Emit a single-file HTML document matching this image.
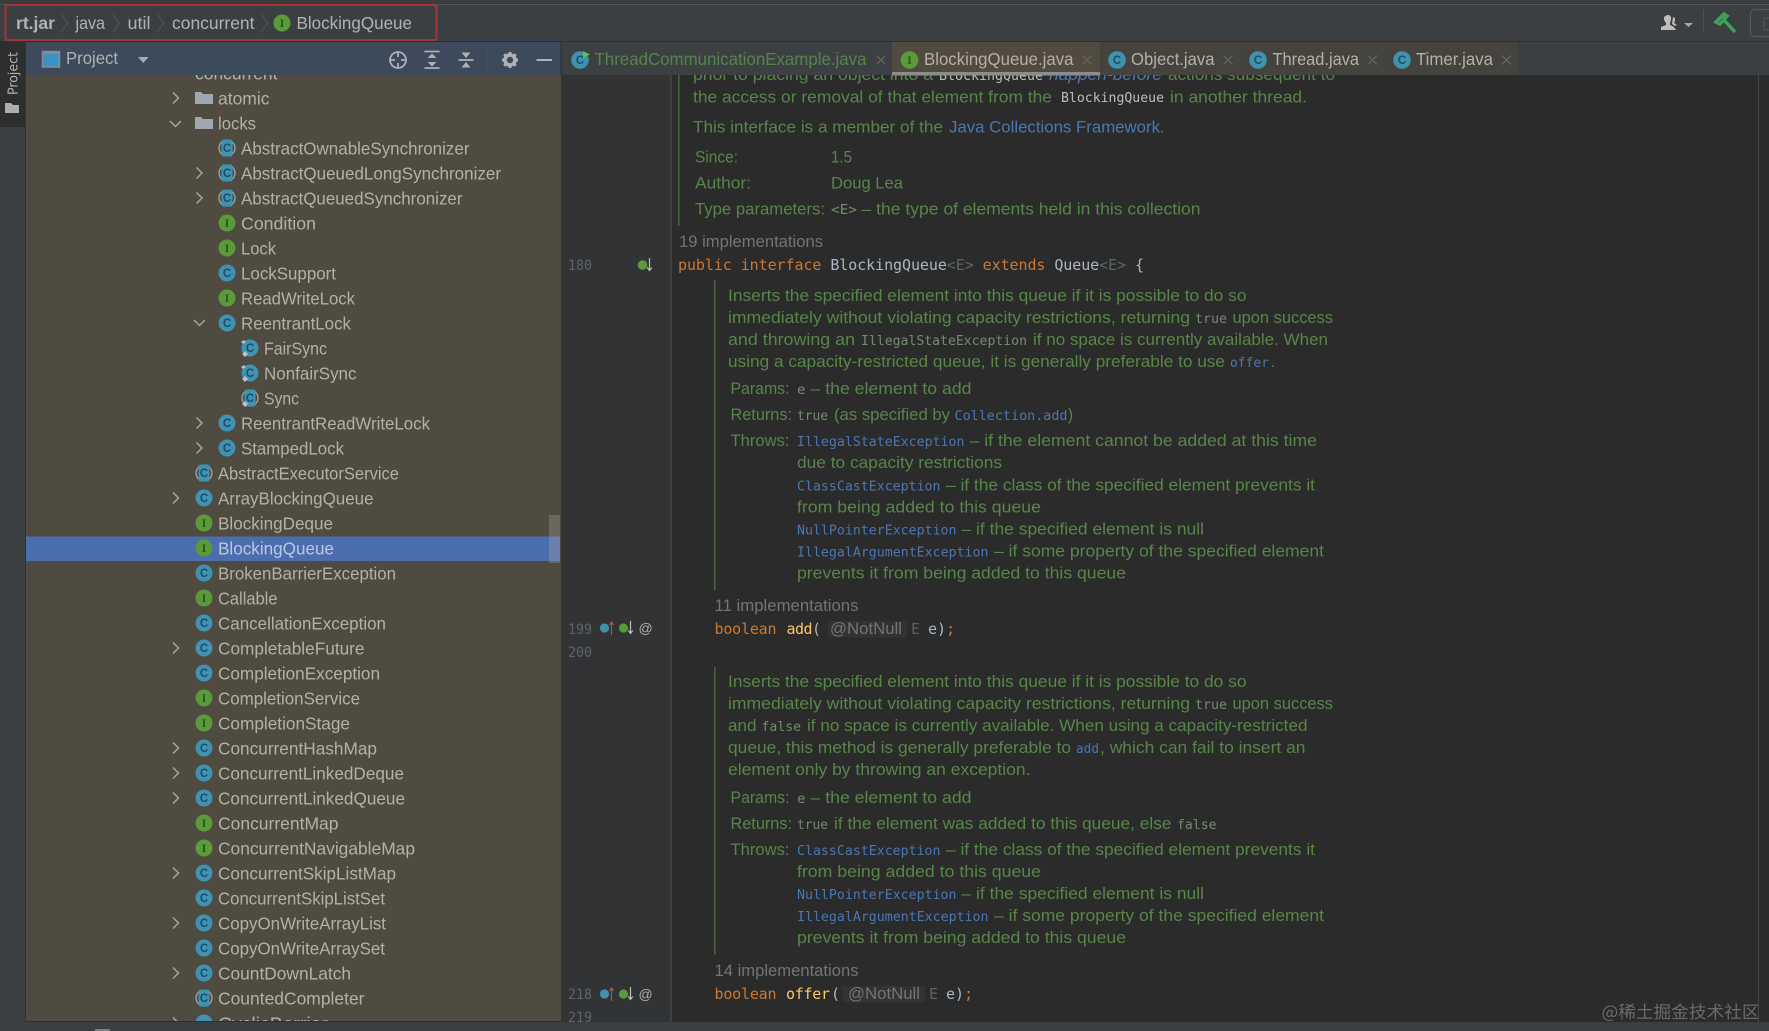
<!DOCTYPE html>
<html lang="en"><head><meta charset="utf-8"><title>BlockingQueue.java</title>
<style>
html,body{margin:0;padding:0;background:#2b2b2b;width:1769px;height:1031px;overflow:hidden}
svg{display:block}
text{white-space:pre}
.t{font:17.5px "Liberation Sans",sans-serif;fill:#b3b1a6;transform:translateY(-1px)}
.d{font:16.5px "Liberation Sans",sans-serif;fill:#588549}
.m{font:13px "DejaVu Sans Mono","Liberation Mono",monospace;fill:#728d6e}
.b{font:13px "DejaVu Sans Mono","Liberation Mono",monospace;fill:#4a77b4}
.w{font:13px "DejaVu Sans Mono","Liberation Mono",monospace;fill:#bdbdbd}
.l{font:16.5px "Liberation Sans",sans-serif;fill:#4a77b4}
.g{font:16.5px "Liberation Sans",sans-serif;fill:#747474}
.n{font:14px "DejaVu Sans Mono","Liberation Mono",monospace;fill:#606366}
.c{font:15px "DejaVu Sans Mono","Liberation Mono",monospace;fill:#a9b7c6}
.k{fill:#cc7832}.f{fill:#ffc66d}.e{fill:#5a6668}
.ci{font:bold 11.5px "Liberation Sans",sans-serif;fill:#174f6c;text-anchor:middle}
.ii{font:bold 12px "Liberation Serif",serif;fill:#255c18;text-anchor:middle}
.cc{fill:#4092b0}.ic{fill:#5b9a3a}
.ch{fill:none;stroke:#a5a39a;stroke-width:1.5}
.ring{fill:none;stroke:#9aa7b0;stroke-width:1.3}
.bc{fill:none;stroke:#55585a;stroke-width:1}
.x{stroke:#64645e;stroke-width:1.3;fill:none}
.ico{fill:none;stroke:#afb1b3;stroke-width:1.8}
.tab{font:17.5px "Liberation Sans",sans-serif;fill:#b3b1a7}
.crumb{font:17.5px "Liberation Sans",sans-serif;fill:#b0b2b3}
</style></head><body>
<svg xmlns="http://www.w3.org/2000/svg" width="1769" height="1031" viewBox="0 0 1769 1031">
<rect width="1769" height="1031" fill="#2b2b2b"/>
<rect x="561" y="42" width="110" height="989" fill="#313335"/>
<line x1="671" y1="42" x2="671" y2="1022" stroke="#505254" stroke-width="1"/>
<line x1="1758.5" y1="75" x2="1758.5" y2="1022" stroke="#434343" stroke-width="1"/>

<!-- editor top doc -->
<rect x="678" y="75" width="1.6" height="151" fill="#46603f"/>
<text class="d" x="693" y="80" textLength="240" lengthAdjust="spacingAndGlyphs">prior to placing an object into a</text>
<text class="w" x="939" y="80" textLength="104" lengthAdjust="spacingAndGlyphs">BlockingQueue</text>
<text class="l" x="1049" y="80" textLength="113" lengthAdjust="spacingAndGlyphs" style="font-style:italic">happen-before</text>
<text class="d" x="1168" y="80" textLength="167" lengthAdjust="spacingAndGlyphs">actions subsequent to</text>
<text class="d" x="693" y="102.5" textLength="359" lengthAdjust="spacingAndGlyphs">the access or removal of that element from the</text>
<text class="w" x="1061" y="102" textLength="103" lengthAdjust="spacingAndGlyphs">BlockingQueue</text>
<text class="d" x="1170" y="102.5" textLength="137" lengthAdjust="spacingAndGlyphs">in another thread.</text>
<text class="d" x="693" y="132.5" textLength="250" lengthAdjust="spacingAndGlyphs">This interface is a member of the</text>
<text class="l" x="949" y="132.5" textLength="211" lengthAdjust="spacingAndGlyphs">Java Collections Framework</text>
<text class="d" x="1160" y="132.5" textLength="4" lengthAdjust="spacingAndGlyphs">.</text>
<text class="d" x="695" y="162.5" textLength="43" lengthAdjust="spacingAndGlyphs">Since:</text>
<text class="d" x="831" y="162.5" textLength="21" lengthAdjust="spacingAndGlyphs">1.5</text>
<text class="d" x="695" y="188.5" textLength="56" lengthAdjust="spacingAndGlyphs">Author:</text>
<text class="d" x="831" y="188.5" textLength="72" lengthAdjust="spacingAndGlyphs">Doug Lea</text>
<text class="d" x="695" y="214.5" textLength="130" lengthAdjust="spacingAndGlyphs">Type parameters:</text>
<text class="m" x="831" y="214" textLength="26" lengthAdjust="spacingAndGlyphs">&lt;E&gt;</text>
<text class="d" x="861.5" y="214.5" textLength="339" lengthAdjust="spacingAndGlyphs">– the type of elements held in this collection</text>
<text class="g" x="679" y="247" textLength="144" lengthAdjust="spacingAndGlyphs">19 implementations</text>

<text class="n" x="568" y="270" textLength="24" lengthAdjust="spacingAndGlyphs">180</text>
<circle cx="642.5" cy="265" r="4.8" fill="#5b9a3a"/><path d="M649.5 258v12M647.2 267.5l2.3 3 2.3-3" fill="none" stroke="#bdbdbd" stroke-width="1.2"/>
<text class="c" x="678" y="270" textLength="466" lengthAdjust="spacing"><tspan class="k">public interface </tspan>BlockingQueue<tspan class="e">&lt;E&gt;</tspan> <tspan class="k">extends </tspan>Queue<tspan class="e">&lt;E&gt;</tspan> {</text>

<!-- block 1 -->
<rect x="714" y="280" width="1.6" height="310" fill="#46603f"/>
<text class="d" x="728" y="301" textLength="518.5" lengthAdjust="spacingAndGlyphs">Inserts the specified element into this queue if it is possible to do so</text>
<text class="d" x="728" y="323" textLength="462" lengthAdjust="spacingAndGlyphs">immediately without violating capacity restrictions, returning</text>
<text class="m" x="1195" y="323" textLength="32" lengthAdjust="spacingAndGlyphs">true</text>
<text class="d" x="1232.5" y="323" textLength="100.5" lengthAdjust="spacingAndGlyphs">upon success</text>
<text class="d" x="728" y="345" textLength="127" lengthAdjust="spacingAndGlyphs">and throwing an</text>
<text class="m" x="861" y="345" textLength="166" lengthAdjust="spacingAndGlyphs">IllegalStateException</text>
<text class="d" x="1033" y="345" textLength="295" lengthAdjust="spacingAndGlyphs">if no space is currently available. When</text>
<text class="d" x="728" y="367" textLength="497" lengthAdjust="spacingAndGlyphs">using a capacity-restricted queue, it is generally preferable to use</text>
<text class="b" x="1230" y="367" textLength="39" lengthAdjust="spacingAndGlyphs">offer</text>
<text class="d" x="1271" y="367" textLength="4" lengthAdjust="spacingAndGlyphs">.</text>
<text class="d" x="730.5" y="394" textLength="59" lengthAdjust="spacingAndGlyphs">Params:</text>
<text class="m" x="797" y="394" textLength="8.5" lengthAdjust="spacingAndGlyphs">e</text>
<text class="d" x="810.5" y="394" textLength="161" lengthAdjust="spacingAndGlyphs">– the element to add</text>
<text class="d" x="730.5" y="420" textLength="61.5" lengthAdjust="spacingAndGlyphs">Returns:</text>
<text class="m" x="797" y="420" textLength="31" lengthAdjust="spacingAndGlyphs">true</text>
<text class="d" x="834" y="420" textLength="116" lengthAdjust="spacingAndGlyphs">(as specified by</text>
<text class="b" x="954.5" y="420" textLength="113" lengthAdjust="spacingAndGlyphs">Collection.add</text>
<text class="d" x="1068" y="420" textLength="5" lengthAdjust="spacingAndGlyphs">)</text>
<text class="d" x="730.5" y="446" textLength="59" lengthAdjust="spacingAndGlyphs">Throws:</text>
<text class="b" x="797" y="446" textLength="167.5" lengthAdjust="spacingAndGlyphs">IllegalStateException</text>
<text class="d" x="969.5" y="446" textLength="347.5" lengthAdjust="spacingAndGlyphs">– if the element cannot be added at this time</text>
<text class="d" x="797" y="468" textLength="205" lengthAdjust="spacingAndGlyphs">due to capacity restrictions</text>
<text class="b" x="797" y="490.5" textLength="143.5" lengthAdjust="spacingAndGlyphs">ClassCastException</text>
<text class="d" x="946" y="490.5" textLength="369" lengthAdjust="spacingAndGlyphs">– if the class of the specified element prevents it</text>
<text class="d" x="797" y="512.5" textLength="244" lengthAdjust="spacingAndGlyphs">from being added to this queue</text>
<text class="b" x="797" y="534.5" textLength="159.5" lengthAdjust="spacingAndGlyphs">NullPointerException</text>
<text class="d" x="961.5" y="534.5" textLength="242.5" lengthAdjust="spacingAndGlyphs">– if the specified element is null</text>
<text class="b" x="797" y="556.5" textLength="191.5" lengthAdjust="spacingAndGlyphs">IllegalArgumentException</text>
<text class="d" x="994" y="556.5" textLength="330" lengthAdjust="spacingAndGlyphs">– if some property of the specified element</text>
<text class="d" x="797" y="578.5" textLength="329" lengthAdjust="spacingAndGlyphs">prevents it from being added to this queue</text>
<text class="g" x="714.5" y="611" textLength="144" lengthAdjust="spacingAndGlyphs">11 implementations</text>

<text class="n" x="568" y="634" textLength="24" lengthAdjust="spacingAndGlyphs">199</text>
<circle cx="604.5" cy="628" r="4.6" fill="#3e90ad"/><path d="M611.5 635v-12M609.3 625l2.2-3 2.2 3" fill="none" stroke="#b5523a" stroke-width="1.2"/>
<circle cx="623.5" cy="628" r="4.6" fill="#5b9a3a"/><path d="M630.5 621v12M628.3 630.5l2.2 3 2.2-3" fill="none" stroke="#bdbdbd" stroke-width="1.2"/>
<text x="638.5" y="633" font-family="Liberation Sans,sans-serif" font-size="14" fill="#b0b0b0">@</text>
<text class="n" x="568" y="657" textLength="24" lengthAdjust="spacingAndGlyphs">200</text>

<text class="c k" x="714.5" y="634" textLength="62" lengthAdjust="spacing">boolean</text>
<text class="c f" x="786.5" y="634" textLength="26" lengthAdjust="spacing">add</text>
<text class="c" x="812" y="634">(</text>
<rect x="828" y="621" width="79" height="16.5" rx="2" fill="#333333"/>
<text x="830" y="634" class="g" textLength="72" lengthAdjust="spacingAndGlyphs">@NotNull</text>
<text class="c" x="911" y="634" style="fill:#606060">E</text>
<text class="c" x="928" y="634">e)<tspan class="k">;</tspan></text>

<!-- block 2 -->
<rect x="714" y="667" width="1.6" height="288" fill="#46603f"/>
<text class="d" x="728" y="687" textLength="518.5" lengthAdjust="spacingAndGlyphs">Inserts the specified element into this queue if it is possible to do so</text>
<text class="d" x="728" y="709" textLength="462" lengthAdjust="spacingAndGlyphs">immediately without violating capacity restrictions, returning</text>
<text class="m" x="1195" y="709" textLength="32" lengthAdjust="spacingAndGlyphs">true</text>
<text class="d" x="1232.5" y="709" textLength="100.5" lengthAdjust="spacingAndGlyphs">upon success</text>
<text class="d" x="728" y="731" textLength="28.5" lengthAdjust="spacingAndGlyphs">and</text>
<text class="m" x="761.5" y="731" textLength="39.5" lengthAdjust="spacingAndGlyphs">false</text>
<text class="d" x="807" y="731" textLength="500.5" lengthAdjust="spacingAndGlyphs">if no space is currently available. When using a capacity-restricted</text>
<text class="d" x="728" y="753" textLength="343" lengthAdjust="spacingAndGlyphs">queue, this method is generally preferable to</text>
<text class="b" x="1076" y="753" textLength="23" lengthAdjust="spacingAndGlyphs">add</text>
<text class="d" x="1100" y="753" textLength="205.5" lengthAdjust="spacingAndGlyphs">, which can fail to insert an</text>
<text class="d" x="728" y="775" textLength="302.5" lengthAdjust="spacingAndGlyphs">element only by throwing an exception.</text>
<text class="d" x="730.5" y="803" textLength="59" lengthAdjust="spacingAndGlyphs">Params:</text>
<text class="m" x="797" y="803" textLength="8.5" lengthAdjust="spacingAndGlyphs">e</text>
<text class="d" x="810.5" y="803" textLength="161" lengthAdjust="spacingAndGlyphs">– the element to add</text>
<text class="d" x="730.5" y="829" textLength="61.5" lengthAdjust="spacingAndGlyphs">Returns:</text>
<text class="m" x="797" y="829" textLength="31" lengthAdjust="spacingAndGlyphs">true</text>
<text class="d" x="834" y="829" textLength="337.5" lengthAdjust="spacingAndGlyphs">if the element was added to this queue, else</text>
<text class="m" x="1177" y="829" textLength="39.5" lengthAdjust="spacingAndGlyphs">false</text>
<text class="d" x="730.5" y="855" textLength="59" lengthAdjust="spacingAndGlyphs">Throws:</text>
<text class="b" x="797" y="855" textLength="143.5" lengthAdjust="spacingAndGlyphs">ClassCastException</text>
<text class="d" x="946" y="855" textLength="369" lengthAdjust="spacingAndGlyphs">– if the class of the specified element prevents it</text>
<text class="d" x="797" y="877" textLength="244" lengthAdjust="spacingAndGlyphs">from being added to this queue</text>
<text class="b" x="797" y="899" textLength="159.5" lengthAdjust="spacingAndGlyphs">NullPointerException</text>
<text class="d" x="961.5" y="899" textLength="242.5" lengthAdjust="spacingAndGlyphs">– if the specified element is null</text>
<text class="b" x="797" y="921" textLength="191.5" lengthAdjust="spacingAndGlyphs">IllegalArgumentException</text>
<text class="d" x="994" y="921" textLength="330" lengthAdjust="spacingAndGlyphs">– if some property of the specified element</text>
<text class="d" x="797" y="943" textLength="329" lengthAdjust="spacingAndGlyphs">prevents it from being added to this queue</text>
<text class="g" x="714.5" y="976" textLength="144" lengthAdjust="spacingAndGlyphs">14 implementations</text>

<text class="n" x="568" y="999" textLength="24" lengthAdjust="spacingAndGlyphs">218</text>
<circle cx="604.5" cy="994" r="4.6" fill="#3e90ad"/><path d="M611.5 1001v-12M609.3 991l2.2-3 2.2 3" fill="none" stroke="#b5523a" stroke-width="1.2"/>
<circle cx="623.5" cy="994" r="4.6" fill="#5b9a3a"/><path d="M630.5 987v12M628.3 996.5l2.2 3 2.2-3" fill="none" stroke="#bdbdbd" stroke-width="1.2"/>
<text x="638.5" y="999" font-family="Liberation Sans,sans-serif" font-size="14" fill="#b0b0b0">@</text>
<text class="n" x="568" y="1022" textLength="24" lengthAdjust="spacingAndGlyphs">219</text>
<text class="c k" x="714.5" y="999" textLength="62" lengthAdjust="spacing">boolean</text>
<text class="c f" x="786" y="999" textLength="44" lengthAdjust="spacing">offer</text>
<text class="c" x="831" y="999">(</text>
<rect x="842" y="986" width="83" height="16.5" rx="2" fill="#333333"/>
<text x="848" y="999" class="g" textLength="72" lengthAdjust="spacingAndGlyphs">@NotNull</text>
<text class="c" x="929" y="999" style="fill:#606060">E</text>
<text class="c" x="946" y="999">e)<tspan class="k">;</tspan></text>

<text x="1601.5" y="1018" font-family="'Noto Sans CJK SC',sans-serif" font-size="17" fill="#6a6a6a" textLength="158" lengthAdjust="spacingAndGlyphs">@稀土掘金技术社区</text>

<!-- project tool window tree -->
<rect x="26" y="42" width="535" height="980" fill="#4f4b41"/>
<rect x="26" y="536.5" width="534" height="24.5" fill="#4b6eaf"/>
<rect x="549" y="515" width="11" height="21.5" fill="#6a675f"/>
<rect x="549" y="536.5" width="11" height="24.5" fill="#6b81ab"/>
<rect x="549" y="561" width="11" height="2" fill="#6a675f"/>

<path d="M172 74V69h18v5z" fill="#a0a6ad"/><text class="t" x="195" y="80.5" textLength="82.5" lengthAdjust="spacingAndGlyphs">concurrent</text>
<path class="ch" d="M173 92.5l5.5 5.5-5.5 5.5"/>
<path d="M195 104V92h6l2 2h10v10z" fill="#a0a6ad"/><text class="t" x="218" y="105.5" textLength="51.5" lengthAdjust="spacingAndGlyphs">atomic</text>
<path class="ch" d="M170 121l5.5 5.5 5.5-5.5"/>
<path d="M195 129V117h6l2 2h10v10z" fill="#a0a6ad"/><text class="t" x="218" y="130.5" textLength="38" lengthAdjust="spacingAndGlyphs">locks</text>

<circle class="ring" cx="227" cy="148" r="8"/><rect class="cc" x="221.5" y="139.5" width="11" height="17" rx="2"/><text class="ci" x="227" y="152">C</text>
<text class="t" x="241" y="155.5" textLength="228.5" lengthAdjust="spacingAndGlyphs">AbstractOwnableSynchronizer</text>
<path class="ch" d="M196.5 167.5l5.5 5.5-5.5 5.5"/><circle class="ring" cx="227" cy="173" r="8"/><rect class="cc" x="221.5" y="164.5" width="11" height="17" rx="2"/><text class="ci" x="227" y="177">C</text>
<text class="t" x="241" y="180.5" textLength="260" lengthAdjust="spacingAndGlyphs">AbstractQueuedLongSynchronizer</text>
<path class="ch" d="M196.5 192.5l5.5 5.5-5.5 5.5"/><circle class="ring" cx="227" cy="198" r="8"/><rect class="cc" x="221.5" y="189.5" width="11" height="17" rx="2"/><text class="ci" x="227" y="202">C</text>
<text class="t" x="241" y="205.5" textLength="221.5" lengthAdjust="spacingAndGlyphs">AbstractQueuedSynchronizer</text>
<circle class="ic" cx="227" cy="223" r="8.5"/><text class="ii" x="227" y="227">I</text>
<text class="t" x="241" y="230.5" textLength="75" lengthAdjust="spacingAndGlyphs">Condition</text>
<circle class="ic" cx="227" cy="248" r="8.5"/><text class="ii" x="227" y="252">I</text>
<text class="t" x="241" y="255.5" textLength="35" lengthAdjust="spacingAndGlyphs">Lock</text>
<circle class="cc" cx="227" cy="273" r="8.5"/><text class="ci" x="227" y="277">C</text>
<text class="t" x="241" y="280.5" textLength="95" lengthAdjust="spacingAndGlyphs">LockSupport</text>
<circle class="ic" cx="227" cy="298" r="8.5"/><text class="ii" x="227" y="302">I</text>
<text class="t" x="241" y="305.5" textLength="114" lengthAdjust="spacingAndGlyphs">ReadWriteLock</text>
<path class="ch" d="M194 320l5.5 5.5 5.5-5.5"/><circle class="cc" cx="227" cy="323" r="8.5"/><text class="ci" x="227" y="327">C</text>
<text class="t" x="241" y="330.5" textLength="110" lengthAdjust="spacingAndGlyphs">ReentrantLock</text>

<circle class="cc" cx="250" cy="348" r="8.5"/><text class="ci" x="250" y="352">C</text><path d="M241 342l3-2 2 2-3 2zM242 354l3-3 3 3-3 3z" fill="#b8c0c8"/>
<text class="t" x="264" y="355.5" textLength="63" lengthAdjust="spacingAndGlyphs">FairSync</text>
<circle class="cc" cx="250" cy="373" r="8.5"/><text class="ci" x="250" y="377">C</text><path d="M241 367l3-2 2 2-3 2zM242 379l3-3 3 3-3 3z" fill="#b8c0c8"/>
<text class="t" x="264" y="380.5" textLength="92.5" lengthAdjust="spacingAndGlyphs">NonfairSync</text>
<circle class="ring" cx="250" cy="398" r="8"/><rect class="cc" x="244.5" y="389.5" width="11" height="17" rx="2"/><text class="ci" x="250" y="402">C</text><path d="M242 404l3-3 3 3-3 3z" fill="#b8c0c8"/>
<text class="t" x="264" y="405.5" textLength="35" lengthAdjust="spacingAndGlyphs">Sync</text>

<path class="ch" d="M196.5 417.5l5.5 5.5-5.5 5.5"/><circle class="cc" cx="227" cy="423" r="8.5"/><text class="ci" x="227" y="427">C</text>
<text class="t" x="241" y="430.5" textLength="189" lengthAdjust="spacingAndGlyphs">ReentrantReadWriteLock</text>
<path class="ch" d="M196.5 442.5l5.5 5.5-5.5 5.5"/><circle class="cc" cx="227" cy="448" r="8.5"/><text class="ci" x="227" y="452">C</text>
<text class="t" x="241" y="455.5" textLength="103" lengthAdjust="spacingAndGlyphs">StampedLock</text>

<circle class="ring" cx="204" cy="473" r="8"/><rect class="cc" x="198.5" y="464.5" width="11" height="17" rx="2"/><text class="ci" x="204" y="477">C</text>
<text class="t" x="218" y="480.5" textLength="181" lengthAdjust="spacingAndGlyphs">AbstractExecutorService</text>
<path class="ch" d="M173 492.5l5.5 5.5-5.5 5.5"/><circle class="cc" cx="204" cy="498" r="8.5"/><text class="ci" x="204" y="502">C</text>
<text class="t" x="218" y="505.5" textLength="155.5" lengthAdjust="spacingAndGlyphs">ArrayBlockingQueue</text>
<circle class="ic" cx="204" cy="523" r="8.5"/><text class="ii" x="204" y="527">I</text>
<text class="t" x="218" y="530.5" textLength="115" lengthAdjust="spacingAndGlyphs">BlockingDeque</text>
<circle class="ic" cx="204" cy="548" r="8.5"/><text class="ii" x="204" y="552">I</text>
<text class="t" x="218" y="555.5" textLength="116" lengthAdjust="spacingAndGlyphs" style="fill:#bcc8dc">BlockingQueue</text>
<circle class="cc" cx="204" cy="573" r="8.5"/><text class="ci" x="204" y="577">C</text>
<text class="t" x="218" y="580.5" textLength="178" lengthAdjust="spacingAndGlyphs">BrokenBarrierException</text>
<circle class="ic" cx="204" cy="598" r="8.5"/><text class="ii" x="204" y="602">I</text>
<text class="t" x="218" y="605.5" textLength="59.5" lengthAdjust="spacingAndGlyphs">Callable</text>
<circle class="cc" cx="204" cy="623" r="8.5"/><text class="ci" x="204" y="627">C</text>
<text class="t" x="218" y="630.5" textLength="168" lengthAdjust="spacingAndGlyphs">CancellationException</text>
<path class="ch" d="M173 642.5l5.5 5.5-5.5 5.5"/><circle class="cc" cx="204" cy="648" r="8.5"/><text class="ci" x="204" y="652">C</text>
<text class="t" x="218" y="655.5" textLength="146.5" lengthAdjust="spacingAndGlyphs">CompletableFuture</text>
<circle class="cc" cx="204" cy="673" r="8.5"/><text class="ci" x="204" y="677">C</text>
<text class="t" x="218" y="680.5" textLength="162" lengthAdjust="spacingAndGlyphs">CompletionException</text>
<circle class="ic" cx="204" cy="698" r="8.5"/><text class="ii" x="204" y="702">I</text>
<text class="t" x="218" y="705.5" textLength="142" lengthAdjust="spacingAndGlyphs">CompletionService</text>
<circle class="ic" cx="204" cy="723" r="8.5"/><text class="ii" x="204" y="727">I</text>
<text class="t" x="218" y="730.5" textLength="132" lengthAdjust="spacingAndGlyphs">CompletionStage</text>
<path class="ch" d="M173 742.5l5.5 5.5-5.5 5.5"/><circle class="cc" cx="204" cy="748" r="8.5"/><text class="ci" x="204" y="752">C</text>
<text class="t" x="218" y="755.5" textLength="159" lengthAdjust="spacingAndGlyphs">ConcurrentHashMap</text>
<path class="ch" d="M173 767.5l5.5 5.5-5.5 5.5"/><circle class="cc" cx="204" cy="773" r="8.5"/><text class="ci" x="204" y="777">C</text>
<text class="t" x="218" y="780.5" textLength="186" lengthAdjust="spacingAndGlyphs">ConcurrentLinkedDeque</text>
<path class="ch" d="M173 792.5l5.5 5.5-5.5 5.5"/><circle class="cc" cx="204" cy="798" r="8.5"/><text class="ci" x="204" y="802">C</text>
<text class="t" x="218" y="805.5" textLength="187" lengthAdjust="spacingAndGlyphs">ConcurrentLinkedQueue</text>
<circle class="ic" cx="204" cy="823" r="8.5"/><text class="ii" x="204" y="827">I</text>
<text class="t" x="218" y="830.5" textLength="120.5" lengthAdjust="spacingAndGlyphs">ConcurrentMap</text>
<circle class="ic" cx="204" cy="848" r="8.5"/><text class="ii" x="204" y="852">I</text>
<text class="t" x="218" y="855.5" textLength="197" lengthAdjust="spacingAndGlyphs">ConcurrentNavigableMap</text>
<path class="ch" d="M173 867.5l5.5 5.5-5.5 5.5"/><circle class="cc" cx="204" cy="873" r="8.5"/><text class="ci" x="204" y="877">C</text>
<text class="t" x="218" y="880.5" textLength="178" lengthAdjust="spacingAndGlyphs">ConcurrentSkipListMap</text>
<circle class="cc" cx="204" cy="898" r="8.5"/><text class="ci" x="204" y="902">C</text>
<text class="t" x="218" y="905.5" textLength="167" lengthAdjust="spacingAndGlyphs">ConcurrentSkipListSet</text>
<path class="ch" d="M173 917.5l5.5 5.5-5.5 5.5"/><circle class="cc" cx="204" cy="923" r="8.5"/><text class="ci" x="204" y="927">C</text>
<text class="t" x="218" y="930.5" textLength="168" lengthAdjust="spacingAndGlyphs">CopyOnWriteArrayList</text>
<circle class="cc" cx="204" cy="948" r="8.5"/><text class="ci" x="204" y="952">C</text>
<text class="t" x="218" y="955.5" textLength="167" lengthAdjust="spacingAndGlyphs">CopyOnWriteArraySet</text>
<path class="ch" d="M173 967.5l5.5 5.5-5.5 5.5"/><circle class="cc" cx="204" cy="973" r="8.5"/><text class="ci" x="204" y="977">C</text>
<text class="t" x="218" y="980.5" textLength="133" lengthAdjust="spacingAndGlyphs">CountDownLatch</text>
<circle class="ring" cx="204" cy="998" r="8"/><rect class="cc" x="198.5" y="989.5" width="11" height="17" rx="2"/><text class="ci" x="204" y="1002">C</text>
<text class="t" x="218" y="1005.5" textLength="146.5" lengthAdjust="spacingAndGlyphs">CountedCompleter</text>
<path class="ch" d="M173 1017.5l5.5 5.5-5.5 5.5"/><circle class="cc" cx="204" cy="1023" r="8.5"/>
<text class="t" x="218" y="1030.5" textLength="110" lengthAdjust="spacingAndGlyphs">CyclicBarrier</text>

<!-- bottom bar -->
<rect x="0" y="1022" width="1769" height="9" fill="#3c3f41"/>
<line x1="26" y1="1021.5" x2="561" y2="1021.5" stroke="#2e2e2c"/>
<rect x="95" y="1029" width="15" height="2" fill="#7c7e80"/>

<!-- left strip -->
<rect x="0" y="42" width="26" height="989" fill="#3c3f41"/>
<rect x="0" y="42" width="25" height="85" fill="#2c2e30"/>
<line x1="25.5" y1="42" x2="25.5" y2="1022" stroke="#323232"/>
<text transform="translate(17.5,95) rotate(-90)" font-family="DejaVu Sans,sans-serif" font-size="13" fill="#b4b4b4" textLength="43" lengthAdjust="spacingAndGlyphs">Project</text>
<path d="M5 113V103h6l2 2h6v8z" fill="#adadad"/>

<!-- top -->
<rect x="0" y="0" width="1769" height="42" fill="#3c3f41"/>
<rect x="0" y="0" width="1769" height="4" fill="#3a3c3e"/>
<line x1="0" y1="4.5" x2="1769" y2="4.5" stroke="#55585a"/>
<line x1="0" y1="41.5" x2="1769" y2="41.5" stroke="#2d2f30"/>
<rect x="5.5" y="5" width="431" height="35" rx="1.5" fill="none" stroke="#a5343a" stroke-width="2"/>
<text class="crumb" x="16" y="29" textLength="39" lengthAdjust="spacingAndGlyphs" style="font-weight:bold">rt.jar</text>
<path class="bc" d="M61 14l7 9-7 9M113 14l6 9-6 9M157 14l7 9-7 9M261 14l7 9-7 9"/>
<text class="crumb" x="75.5" y="29" textLength="29.5" lengthAdjust="spacingAndGlyphs">java</text>
<text class="crumb" x="127.5" y="29" textLength="23" lengthAdjust="spacingAndGlyphs">util</text>
<text class="crumb" x="172" y="29" textLength="82.5" lengthAdjust="spacingAndGlyphs">concurrent</text>
<circle class="ic" cx="282" cy="23" r="8.5"/><text class="ii" x="282" y="27">I</text>
<text class="crumb" x="296.5" y="29" textLength="115.5" lengthAdjust="spacingAndGlyphs">BlockingQueue</text>

<path d="M1661 30v-3l5-2v-2l-2-3v-3l3-2h2l2 2v3l-1 3v2l4 2 2 3zM1673 17l2 1v3l-1 2 3 2-2 1-3-2z" fill="#bcbcbc"/>
<path d="M1684 23h9l-4.5 4z" fill="#a8a8a8"/>
<line x1="1703.5" y1="10" x2="1703.5" y2="33" stroke="#4c4f51"/>
<path d="M1716 22l8-8 3 2-7 8zM1724 20l11 12" fill="none" stroke="#3fa05a" stroke-width="3.5"/>
<rect x="1750.5" y="9.5" width="30" height="27" rx="4" fill="none" stroke="#55585a" stroke-width="1.2"/>
<rect x="1764" y="18" width="6" height="12" fill="none" stroke="#4e5a5e"/>

<!-- panel header -->
<rect x="26" y="42" width="535" height="33" fill="#3c4a5c"/>
<rect x="42.5" y="51.5" width="17" height="15.5" fill="#3b93c4" stroke="#868c92" stroke-width="1.5"/>
<rect x="42" y="51" width="18" height="3" fill="#868c92"/>
<text class="t" x="66" y="65" textLength="52" lengthAdjust="spacingAndGlyphs" style="fill:#aeb2b6">Project</text>
<path d="M138 57h10.5l-5.2 6z" fill="#a6aaae"/>
<circle class="ico" cx="398" cy="60" r="8"/><path class="ico" d="M398 52v5M398 63v5M390 60h5M401 60h5"/>
<path class="ico" d="M424.5 51.5h15M424.5 68h15"/><path d="M432 53.5l4.5 4.5h-9zM432 66.5l4.5-4.5h-9z" fill="#afb1b3"/>
<path class="ico" d="M458.5 60h15"/><path d="M466 58l4.5-5.5h-9zM466 62l4.5 5.5h-9z" fill="#afb1b3"/>
<line x1="487.5" y1="48" x2="487.5" y2="71" stroke="#46505c"/>
<circle cx="510" cy="60" r="5" fill="none" stroke="#afb1b3" stroke-width="3.6"/><path d="M510 52v3M510 65v3M502 60h3M515 60h3M504.3 54.3l2 2M513.7 63.7l2 2M515.7 54.3l-2 2M506.3 63.7l-2 2" stroke="#afb1b3" stroke-width="3"/>
<line x1="536.5" y1="60" x2="552" y2="60" stroke="#afb1b3" stroke-width="2"/>
<line x1="561" y1="42" x2="561" y2="75" stroke="#2f3338"/>

<!-- tabs -->
<rect x="562" y="42" width="1207" height="33" fill="#3c3f41"/>
<rect x="562" y="42" width="330" height="33" fill="#3d4043"/>
<rect x="892" y="42" width="208" height="33" fill="#514a3f"/>
<rect x="892" y="72" width="208" height="3.5" fill="#8b8d8c"/>
<rect x="1100" y="42" width="418" height="33" fill="#45433d"/>

<circle class="cc" cx="580" cy="60" r="8.8"/><text class="ci" x="580" y="64">C</text><path d="M583 51l7 3.5-7 3.5z" fill="#5fc04f"/>
<text class="tab" x="594.5" y="65" textLength="272" lengthAdjust="spacingAndGlyphs" style="fill:#52854c">ThreadCommunicationExample.java</text>
<path class="x" d="M876.5 55.5l9 9M885.5 55.5l-9 9"/>
<circle class="ic" cx="909.5" cy="60" r="8.8"/><text class="ii" x="909.5" y="64">I</text>
<text class="tab" x="924" y="65" textLength="149.5" lengthAdjust="spacingAndGlyphs">BlockingQueue.java</text>
<path class="x" d="M1082.5 55.5l9 9M1091.5 55.5l-9 9"/>
<circle class="cc" cx="1117" cy="60" r="8.8"/><text class="ci" x="1117" y="64">C</text>
<text class="tab" x="1131" y="65" textLength="83.5" lengthAdjust="spacingAndGlyphs">Object.java</text>
<path class="x" d="M1223.5 55.5l9 9M1232.5 55.5l-9 9"/>
<circle class="cc" cx="1258" cy="60" r="8.8"/><text class="ci" x="1258" y="64">C</text>
<text class="tab" x="1272.5" y="65" textLength="86.5" lengthAdjust="spacingAndGlyphs">Thread.java</text>
<path class="x" d="M1368 55.5l9 9M1377 55.5l-9 9"/>
<circle class="cc" cx="1402" cy="60" r="8.8"/><text class="ci" x="1402" y="64">C</text>
<text class="tab" x="1416" y="65" textLength="77" lengthAdjust="spacingAndGlyphs">Timer.java</text>
<path class="x" d="M1502 55.5l9 9M1511 55.5l-9 9"/>
</svg>
</body></html>
